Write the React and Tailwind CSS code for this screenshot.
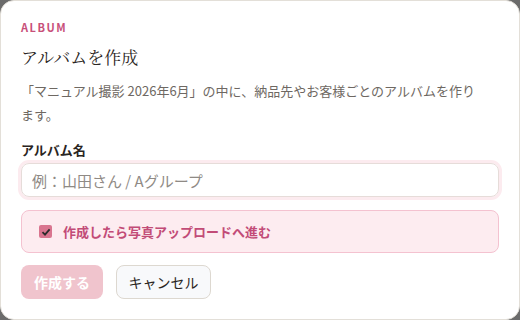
import React, { useState } from 'react';

const sans = { fontFamily: '"Noto Sans CJK JP", "Noto Sans", sans-serif' };

function App() {
  const [name, setName] = useState('');
  const [goUpload, setGoUpload] = useState(true);

  return (
    <div className="w-[520px] h-[320px] bg-[#6b6b6b]" style={sans}>
      <div className="h-full rounded-[14px] border border-[#e3dfd8] bg-white px-5 pt-[18px]">
        <div className="text-[11px] font-bold tracking-[0.14em] text-[#c8507a] leading-4">ALBUM</div>
        <h2
          className="mt-[10px] text-[17px] leading-6 text-[#2a2522]"
          style={{ fontFamily: '"Noto Serif CJK JP", "Noto Sans CJK JP", serif' }}
        >
          アルバムを作成
        </h2>
        <p className="mt-[10px] text-[13px] leading-[24px] text-[#6e6862] pr-4">
          「マニュアル撮影 2026年6月」の中に、納品先やお客様ごとのアルバムを作ります。
        </p>

        <label className="mt-[13px] block text-[13px] font-bold leading-5 text-[#2a2522]">アルバム名</label>
        <input
          type="text"
          value={name}
          onChange={(e) => setName(e.target.value)}
          placeholder="例：山田さん / Aグループ"
          className="mt-[3px] block w-full h-[34px] rounded-lg border border-[#e6dcd9] px-[10px] text-[15px] text-[#2a2522] placeholder:text-[#8f8a85] outline-none ring-[3px] ring-[#fcebef]"
        />

        <label className="mt-[13px] flex items-center gap-[11px] h-[43px] rounded-lg border border-[#f4c2d0] bg-[#fdecf0] px-[17px] cursor-pointer">
          <span className="flex items-center justify-center w-[13px] h-[13px] rounded-[2px] bg-[#d9758f]">
            {goUpload && (
              <svg width="10" height="10" viewBox="0 0 10 10">
                <path d="M1.5 5.2 L4 7.6 L8.6 2.4" fill="none" stroke="#2b2b2b" strokeWidth="1.8" />
              </svg>
            )}
          </span>
          <input type="checkbox" className="hidden" checked={goUpload} onChange={(e) => setGoUpload(e.target.checked)} />
          <span className="text-[13px] font-bold text-[#c24b77]">作成したら写真アップロードへ進む</span>
        </label>

        <div className="mt-[12px] flex gap-[13px]">
          <button
            disabled
            className="h-[34px] w-[82px] rounded-lg bg-[#f0c4cd] text-[14px] font-bold text-white"
          >
            作成する
          </button>
          <button className="h-[34px] w-[95px] rounded-lg border border-[#ddd8d0] bg-[#f8f9fb] text-[14px] text-[#2a2522]">
            キャンセル
          </button>
        </div>
      </div>
    </div>
  );
}

export default App;
